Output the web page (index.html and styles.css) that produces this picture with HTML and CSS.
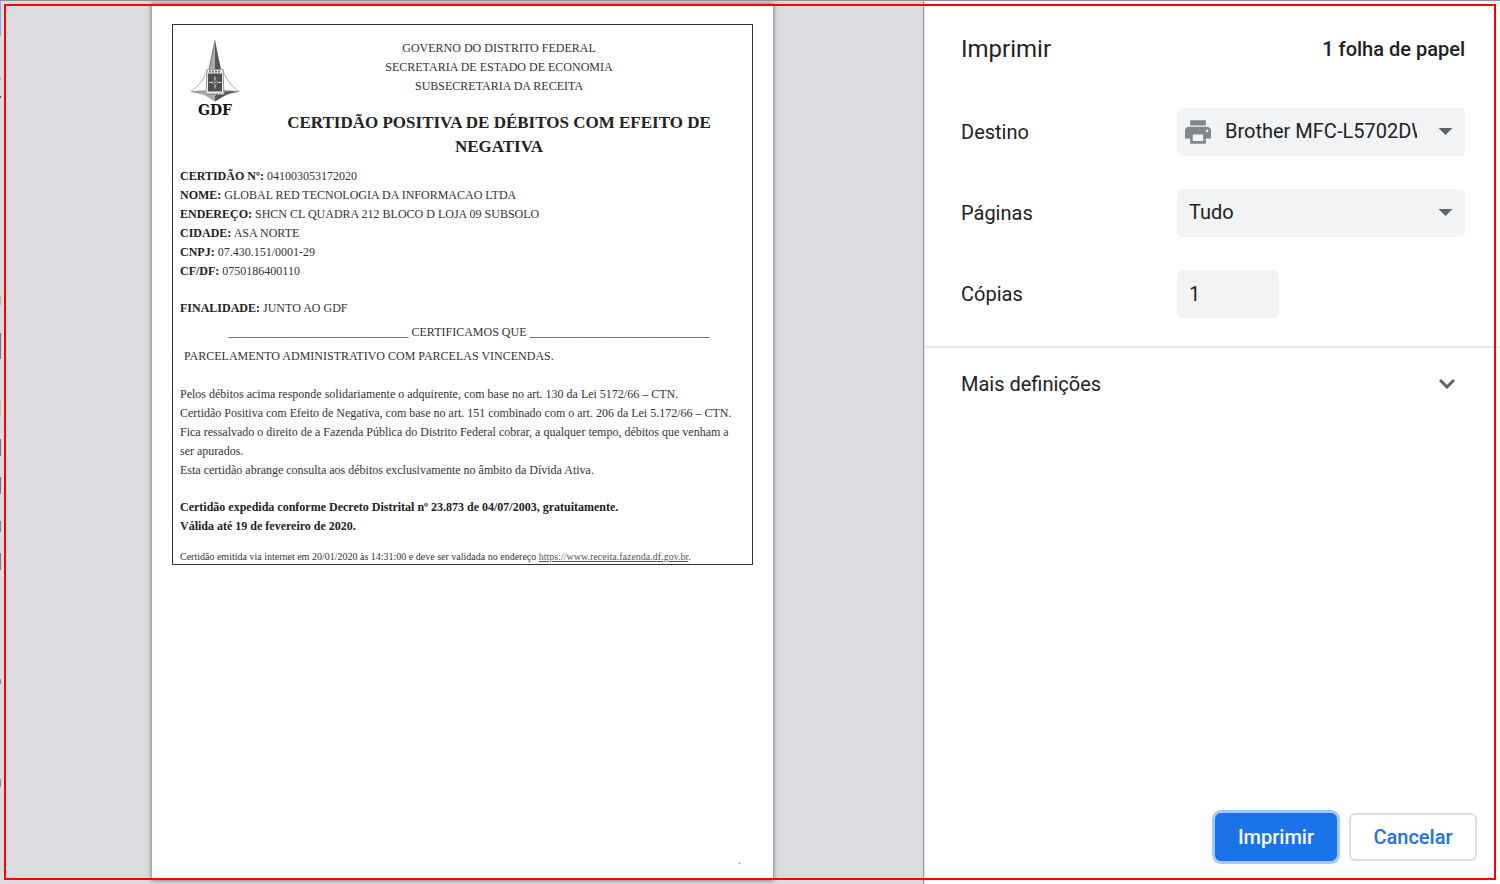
FILE: index.html
```html
<!DOCTYPE html>
<html lang="pt">
<head>
<meta charset="utf-8">
<title>Imprimir</title>
<link rel="stylesheet" href="styles.css">
</head>
<body>
<div class="dialog">
  <main class="preview">
    <article class="sheet">
      <div class="certificate">
        <header class="cert-header">
          <div class="emblem">
            <svg class="emblem-art" viewBox="0 0 50 63" aria-hidden="true">
              <path d="M17 30C14 39 8 46 1 51M33 30c3 9 9 16 16 21" fill="none" stroke="#aaa" stroke-width="1"/>
              <path d="M0 51l9-1 8 0v5z" fill="#999"/>
              <path d="M50 51l-9-1-8 0v5z" fill="#777"/>
              <path d="M25 0L19 29h6z" fill="#aaa"/>
              <path d="M25 0l6 29h-6z" fill="#555"/>
              <path d="M25 0L19 29" fill="none" stroke="#777" stroke-width="1"/>
              <path d="M8 51l8 1 9 3v6z" fill="#aaa"/>
              <path d="M42 51l-8 1-9 3v6z" fill="#555"/>
              <path d="M17 29h16l1 25H16z" fill="#eee" stroke="#999" stroke-width="1"/>
              <path d="M19 31h12" stroke="#777" stroke-width="2" stroke-dasharray="2 1"/>
              <path d="M18 33h14v18H18z" fill="#505050"/>
              <path d="M25 36v4M25 44v4M19 42h4M27 42h4" stroke="#ddd" stroke-width="1"/>
              <path d="M23 40l4 4M27 40l-4 4" fill="none" stroke="#aaa" stroke-width="1"/>
              <path d="M17 53h16" stroke="#999" stroke-width="1" stroke-dasharray="2 1"/>
            </svg>
            <span class="emblem-name">GDF</span>
          </div>
          <div class="cert-heading">
            <p>GOVERNO DO DISTRITO FEDERAL<br>SECRETARIA DE ESTADO DE ECONOMIA<br>SUBSECRETARIA DA RECEITA</p>
            <h1>CERTIDÃO POSITIVA DE DÉBITOS COM EFEITO DE<br>NEGATIVA</h1>
          </div>
        </header>
        <p class="fields"><b>CERTIDÃO Nº:</b> 041003053172020<br>
          <b>NOME:</b> GLOBAL RED TECNOLOGIA DA INFORMACAO LTDA<br>
          <b>ENDEREÇO:</b> SHCN CL QUADRA 212 BLOCO D LOJA 09 SUBSOLO<br>
          <b>CIDADE:</b> ASA NORTE<br>
          <b>CNPJ:</b> 07.430.151/0001-29<br>
          <b>CF/DF:</b> 0750186400110</p>
        <p class="purpose"><b>FINALIDADE:</b> JUNTO AO GDF</p>
        <p class="certify">______________________________ CERTIFICAMOS QUE ______________________________</p>
        <p class="finding">PARCELAMENTO ADMINISTRATIVO COM PARCELAS VINCENDAS.</p>
        <p class="legal">Pelos débitos acima responde solidariamente o adquirente, com base no art. 130 da Lei 5172/66 – CTN.<br>
          Certidão Positiva com Efeito de Negativa, com base no art. 151 combinado com o art. 206 da Lei 5.172/66 – CTN.<br>
          Fica ressalvado o direito de a Fazenda Pública do Distrito Federal cobrar, a qualquer tempo, débitos que venham a<br>
          ser apurados.<br>
          Esta certidão abrange consulta aos débitos exclusivamente no âmbito da Dívida Ativa.</p>
        <p class="issued"><b>Certidão expedida conforme Decreto Distrital nº 23.873 de 04/07/2003, gratuitamente.<br>
          Válida até 19 de fevereiro de 2020.</b></p>
        <p class="source">Certidão emitida via internet em 20/01/2020 às 14:31:00 e deve ser validada no endereço <a href="https://www.receita.fazenda.df.gov.br">https://www.receita.fazenda.df.gov.br</a>.</p>
      </div>
      <p class="page-dot">.</p>
    </article>
  </main>
  <form class="sidebar">
    <header class="side-header">
      <h2>Imprimir</h2>
      <span class="sheet-count">1 folha de papel</span>
    </header>
    <div class="settings">
      <div class="row">
        <label for="destination">Destino</label>
        <div class="select-wrap">
          <svg class="printer" viewBox="2 3 20 18" aria-hidden="true"><path d="M19 8H5c-1.660 0-3 1.340-3 3v6h4v4h12v-4h4v-6c0-1.660-1.340-3-3-3zm-3 11H8v-5h8v5zm3-7c-.55 0-1-.45-1-1s.45-1 1-1 1 .45 1 1-.45 1-1 1zm-1-9H6v4h12V3z"/></svg>
          <select id="destination" class="control with-icon"><option>Brother MFC-L5702DW series</option></select>
          <svg class="arrow" viewBox="0 0 14 7" aria-hidden="true"><path d="M0 0h14L7 7z"/></svg>
        </div>
      </div>
      <div class="row">
        <label for="pages">Páginas</label>
        <div class="select-wrap">
          <select id="pages" class="control"><option>Tudo</option></select>
          <svg class="arrow" viewBox="0 0 14 7" aria-hidden="true"><path d="M0 0h14L7 7z"/></svg>
        </div>
      </div>
      <div class="row">
        <label for="copies">Cópias</label>
        <div class="select-wrap"><input id="copies" class="control copies" type="text" inputmode="numeric" value="1"></div>
      </div>
    </div>
    <button class="more" type="button">Mais definições
      <svg class="chevron" viewBox="0 0 16 10" aria-hidden="true"><path d="M1 1l7 7 7-7"/></svg>
    </button>
    <footer class="actions">
      <button class="btn primary" type="submit">Imprimir</button>
      <button class="btn" type="button">Cancelar</button>
    </footer>
  </form>
</div>
<div class="highlight"></div>
</body>
</html>
```
FILE: styles.css
```css
* { box-sizing: border-box; }
body { margin: 0; background: #fff; color: #202124; font-family: Roboto, sans-serif; }
p, h1, h2 { margin: 0; }

.dialog { display: flex; min-height: 100vh; border-top: 1px solid #8f9094; }

/* Preview; the thin strip at the left edge shows bits of the window behind */
.preview {
  flex: 1; display: flex; justify-content: center; padding: 3px 0 4px 2px;
  background: linear-gradient(#8fa8d4 0 35px, transparent 35px 76px, #b0b1b4 76px 79px, transparent 79px 95px, #555 95px 97px, transparent 97px 295px, #c9b28a 295px 304px, transparent 304px 332px, #77787c 332px 358px, transparent 358px 400px, #d0c8a8 400px 416px, transparent 416px 438px, #77787c 438px 455px, transparent 455px 476px, #77787c 476px 493px, transparent 493px 520px, #7d8796 520px 531px, transparent 531px 552px, #a86a6e 552px 569px, transparent 569px 678px, #7d8fa8 678px 683px, transparent 683px 778px, #b08a78 778px 786px, transparent 786px) 0 0 / 1px 100% no-repeat #dadce0;
  border-right: 1px solid #949699; overflow: hidden;
}
.sheet { display: flex; flex-direction: column; justify-content: space-between; width: 100%; max-width: 621px; padding: 20px 20px 10px; background: #fff; box-shadow: 0 0 4px 1px #85868a; font: 12px/19px "Liberation Serif", serif; color: #333; white-space: nowrap; }
.certificate { padding: 14px 0 0 7px; border: 1px solid #333; }
.cert-header { display: grid; grid-template-columns: 70px 1fr; padding-right: 4px; }
.emblem { display: flex; flex-direction: column; align-items: center; padding-top: 1px; }
.emblem-art { width: 50px; height: 64px; }
.emblem-name { font: bold 14px/12px "DejaVu Serif", serif; color: #111; }
.cert-heading { text-align: center; }
.cert-heading h1 { padding-top: 15px; font-size: 17px; line-height: 24px; color: #222; }
.certificate b { color: #222; }
.fields { padding-top: 8px; }
.purpose { padding-top: 18px; }
.certify { padding: 5px 0; padding-left: 6px; text-align: center; }
.finding { padding-left: 4px; }
.legal { padding-top: 19px; }
.issued { padding-top: 18px; }
.source { padding-top: 14px; font-size: 10px; line-height: 14px; }
.source a { color: #555; }
.page-dot { padding-right: 12px; text-align: right; color: #777; }

/* Settings sidebar */
.sidebar { display: flex; flex-direction: column; width: 576px; border-left: 1px solid #e8eaed; font-size: 20px; line-height: 24px; }
.side-header { display: flex; align-items: center; justify-content: space-between; padding: 36px 35px 0 36px; }
.side-header h2 { font-size: 24px; line-height: 24px; font-weight: 400; }
.sheet-count { font-weight: 500; }
.settings { display: flex; flex-direction: column; gap: 33px; padding: 47px 35px 28px 36px; border-bottom: 2px solid #e8eaed; }
.row { display: grid; grid-template-columns: 1fr 288px; align-items: center; }
.select-wrap { position: relative; display: flex; }
.control { appearance: none; width: 100%; height: 48px; padding: 0 48px 2px 12px; border: 0; border-radius: 6px; background: #f1f3f4; color: #202124; font: 20px/24px Roboto, sans-serif; }
.with-icon { padding-left: 48px; }
.copies { width: 102px; padding: 0 12px; }
.printer { position: absolute; left: 8px; top: 12px; width: 26px; height: 24px; fill: #80868b; }
.arrow { position: absolute; right: 12px; top: 20px; width: 15px; height: 7px; fill: #5f6368; pointer-events: none; }
.more { display: flex; align-items: center; justify-content: space-between; padding: 24px 45px 24px 36px; border: 0; background: none; color: inherit; font: inherit; text-align: left; }
.chevron { width: 16px; height: 10px; fill: none; stroke: #5f6368; stroke-width: 3; }
.actions { display: flex; justify-content: flex-end; gap: 12px; margin-top: auto; padding: 0 23px 23px; }
.btn { min-width: 128px; height: 48px; padding: 0 20px; border: 2px solid #dadce0; border-radius: 6px; background: #fff; color: #1a73e8; font: 500 20px/24px Roboto, sans-serif; }
.primary { min-width: 122px; border-color: #1a73e8; background: #1a73e8; color: #fff; box-shadow: 0 0 0 3px #a3c7f6; }

/* Outline drawn around the whole dialog */
.highlight { position: fixed; inset: 4px; border: 2px solid #f00; pointer-events: none; }
```
